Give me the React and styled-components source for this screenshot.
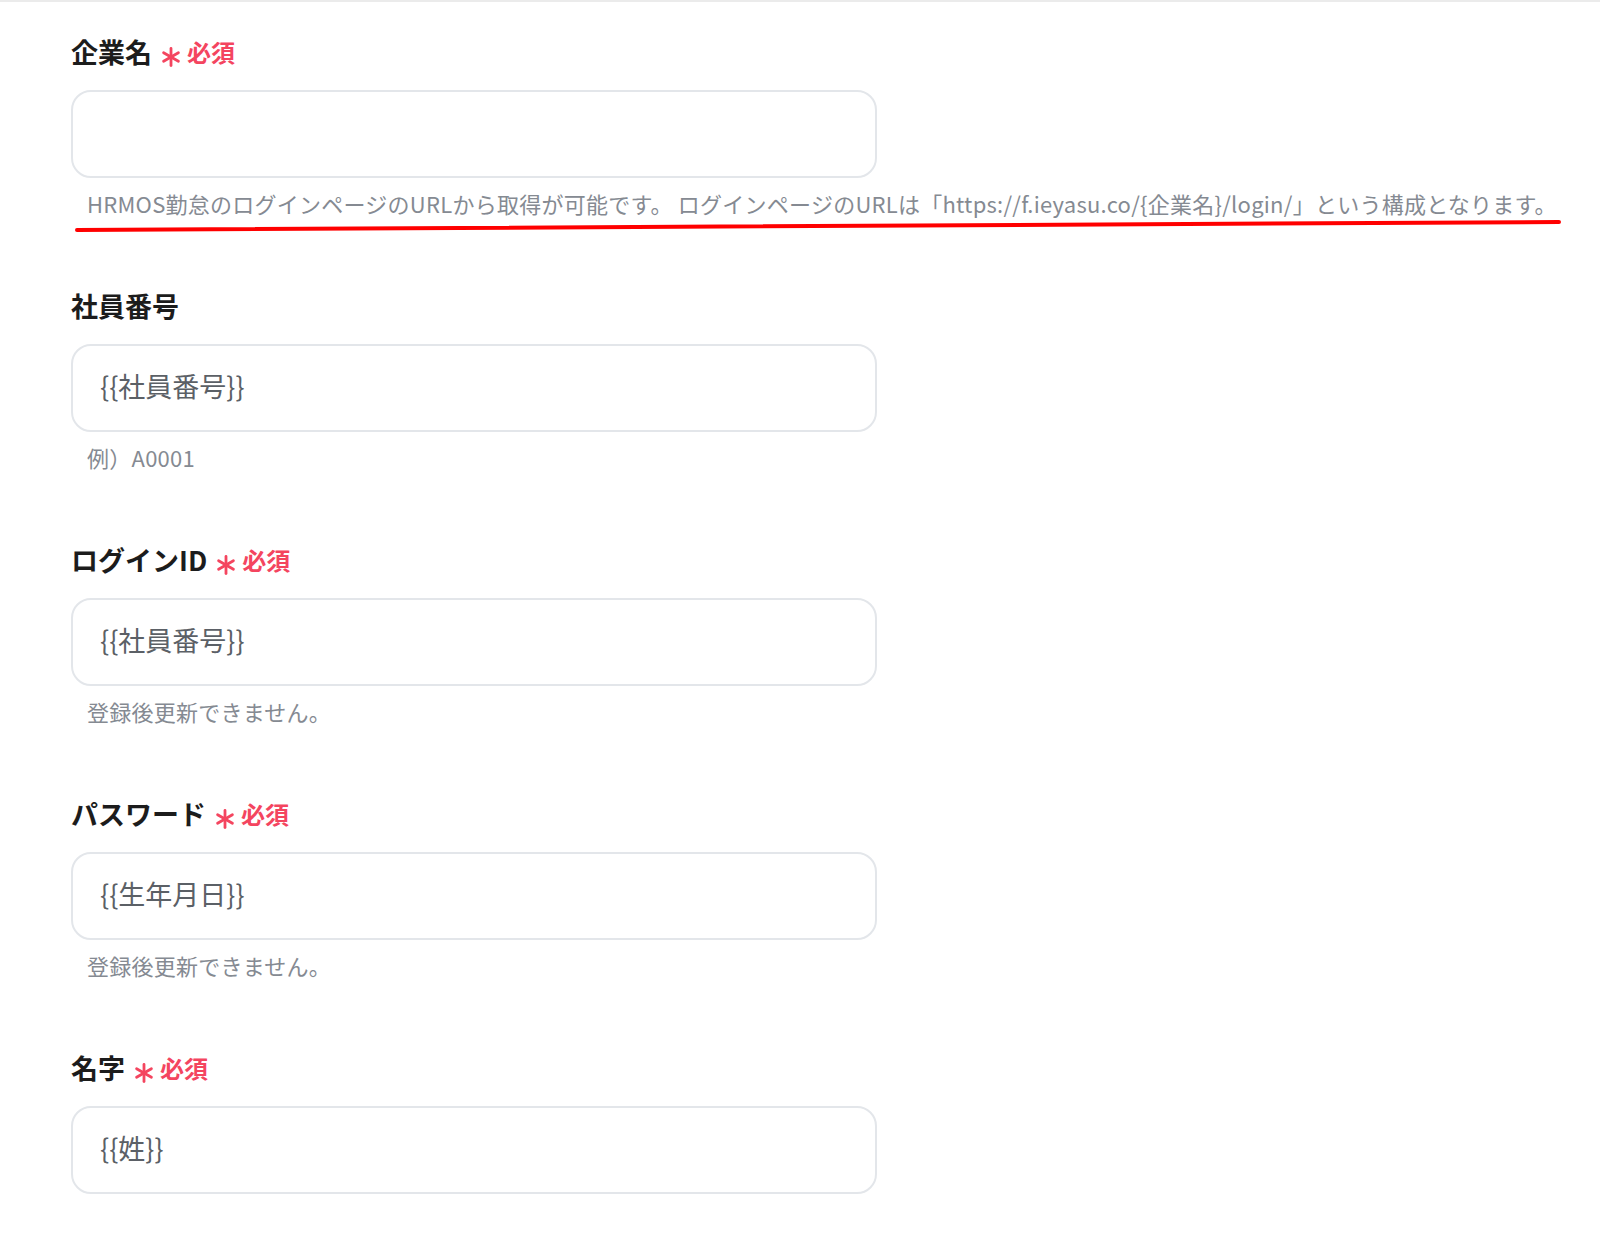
import React from "react";
import styled, { createGlobalStyle } from "styled-components";

const GlobalStyle = createGlobalStyle`
  html, body {
    margin: 0;
    padding: 0;
    background: #fff;
  }
  body {
    font-family: "Noto Sans CJK JP", "Noto Sans", sans-serif;
  }
`;

const fields = [
  {
    label: "企業名",
    required: true,
    value: "",
    help: "HRMOS勤怠のログインページのURLから取得が可能です。 ログインページのURLは「https://f.ieyasu.co/{企業名}/login/」という構成となります。",
  },
  { label: "社員番号", required: false, value: "{{社員番号}}", help: "例）A0001" },
  { label: "ログインID", required: true, value: "{{社員番号}}", help: "登録後更新できません。" },
  { label: "パスワード", required: true, value: "{{生年月日}}", help: "登録後更新できません。" },
  { label: "名字", required: true, value: "{{姓}}", help: "" },
];

const Asterisk = () => (
  <StarIcon viewBox="0 0 20 20" aria-hidden="true">
    <g stroke="#f4455f" strokeWidth="2.8" strokeLinecap="round">
      <line x1="10" y1="1.5" x2="10" y2="18.5" />
      <line x1="2.6" y1="5.7" x2="17.4" y2="14.3" />
      <line x1="2.6" y1="14.3" x2="17.4" y2="5.7" />
    </g>
  </StarIcon>
);

const App = () => {
  return (
    <Page>
      <GlobalStyle />
      {fields.map((f) => (
        <Field key={f.label}>
          <LabelRow>
            <Label>{f.label}</Label>
            {f.required && (
              <>
                <Asterisk />
                <Required>必須</Required>
              </>
            )}
          </LabelRow>
          <Input>{f.value}</Input>
          <Help>{f.help}</Help>
        </Field>
      ))}
      {/* red annotation line under the first hint */}
      <Mark viewBox="0 0 1490 14" preserveAspectRatio="none">
        <path d="M2 11 L1484 3" stroke="#ff0000" strokeWidth="4" strokeLinecap="round" fill="none" />
      </Mark>
    </Page>
  );
};

export default App;

const Page = styled.div`
  position: relative;
  width: 1600px;
  height: 1245px;
  box-sizing: border-box;
  border-top: 2px solid #ebebeb;
  padding: 32px 0 0 71px;
  overflow: hidden;
`;

const Field = styled.div`
  display: flex;
  flex-direction: column;
  margin-bottom: 71px;
`;

const LabelRow = styled.div`
  display: flex;
  align-items: center;
  height: 36px;
`;

const Label = styled.span`
  font-size: 27px;
  font-weight: 700;
  color: #1c1c1c;
  line-height: 36px;
`;

const StarIcon = styled.svg`
  width: 20px;
  height: 20px;
  margin: 10px 6px 0 9px;
`;

const Required = styled.span`
  font-size: 24px;
  font-weight: 700;
  color: #f4455f;
  line-height: 36px;
`;

const Input = styled.div`
  box-sizing: border-box;
  width: 806px;
  height: 88px;
  margin-top: 20px;
  padding: 0 27px 5px;
  display: flex;
  align-items: center;
  border: 2px solid #e3e6ea;
  border-radius: 20px;
  font-size: 27px;
  color: #5b6066;
`;

const Help = styled.div`
  margin-top: 11px;
  padding-left: 16px;
  height: 28px;
  font-size: 22px;
  letter-spacing: 0.25px;
  line-height: 28px;
  color: #858a92;
  white-space: nowrap;
`;

const Mark = styled.svg`
  position: absolute;
  left: 75px;
  top: 217px;
  width: 1490px;
  height: 14px;
`;
